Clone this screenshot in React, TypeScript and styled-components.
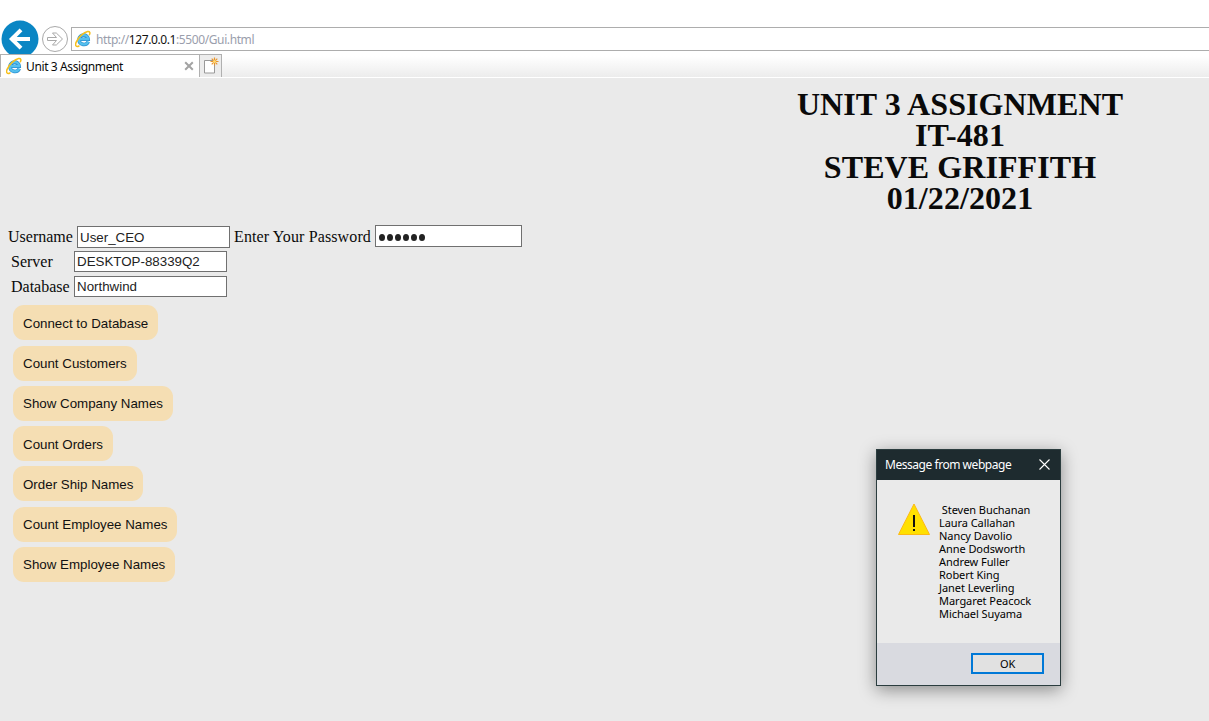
import React from "react";
import styled, { createGlobalStyle } from "styled-components";

const GlobalStyle = createGlobalStyle`
  html, body, #root { margin: 0; height: 100%; }
  body { overflow: hidden; background: #eaeaea; color: #0a0a0a; }
  * { box-sizing: border-box; }
`;

const ui = `"Noto Sans", "Open Sans", sans-serif`;
const arial = `"Liberation Sans", Arial, sans-serif`;
const times = `"Liberation Serif", "Times New Roman", serif`;

const Screen = styled.div`
  width: 1209px;
  height: 721px;
  overflow: hidden;
  position: relative;
  display: flex;
  flex-direction: column;
`;

const Chrome = styled.header`
  flex: none;
  height: 78px;
  padding-top: 20px;
  background: #fff;
  border-bottom: 1px solid #fff;
`;

const NavRow = styled.div`
  display: flex;
  height: 34px;
  padding-left: 1px;
  overflow: hidden;
  > svg { flex: none; }
`;

const AddressBar = styled.div`
  flex: 1;
  height: 24px;
  margin: 7px 0 0 2px;
  display: flex;
  align-items: center;
  padding-left: 3px;
  background: #fff;
  border: solid #adadad;
  border-width: 1px 0 1px 1px;
`;

const Url = styled.span`
  margin: 2px 0 0 5px;
  font: 12px/20px ${ui};
  letter-spacing: -0.4px;
  color: #9a9eac;
  white-space: pre;
  b { font-weight: 400; color: #111; }
`;

const TabRow = styled.div`
  display: flex;
  height: 23px;
  background: linear-gradient(#fff 10%, #ececec);
`;

const Tab = styled.div`
  width: 199px;
  display: flex;
  align-items: center;
  padding: 0 5px;
  background: #fff;
  border-top: 1px solid #b0b0b0;
  border-left: 1px solid #b0b0b0;
`;

const TabTitle = styled.span`
  flex: 1;
  margin: 2px 0 0 4px;
  font: 12px/20px ${ui};
  letter-spacing: -0.38px;
  white-space: nowrap;
`;

const NewTab = styled.div`
  width: 23px;
  display: flex;
  justify-content: center;
  background: #ececec;
  border: 1px solid #b0b0b0;
  border-bottom: 0;
`;

const Page = styled.main`
  width: 1920px;
  padding: 11px 8px 0;
  font: 16px/20px ${times};
`;

const Heading = styled.h1`
  margin: 0;
  font: bold 32px/31.3px ${times};
  letter-spacing: 0.08px;
  text-align: center;
`;

const Credentials = styled.div`
  display: flex;
  height: 23px;
  margin: 10.4px 0 3px;
`;

const FieldRow = styled.div`
  display: flex;
  height: 21px;
  margin: 0 0 4px 3px;
`;

const Label = styled.label<{ $width: number; $top?: number; $spacing?: number }>`
  width: ${(p) => p.$width}px;
  padding-top: ${(p) => p.$top ?? 0}px;
  letter-spacing: ${(p) => p.$spacing ?? 0}px;
  white-space: nowrap;
`;

const TextBox = styled.input<{ $width: number; $height: number; $top?: number }>`
  width: ${(p) => p.$width}px;
  height: ${(p) => p.$height}px;
  margin: ${(p) => p.$top ?? 0}px 4px 0 0;
  padding: 1px 2px 0;
  border: 1px solid #707070;
  border-radius: 0;
  outline: 0;
  background: #fff;
  color: #222;
  font: 13.33px ${arial};
  letter-spacing: 0;
`;

const PasswordBox = styled.div`
  display: flex;
  align-items: center;
  gap: 2px;
  width: 147px;
  height: 22px;
  padding: 4px 3px 0;
  border: 1px solid #707070;
  background: #fff;
`;

const Dot = styled.i`
  width: 6px;
  height: 7px;
  border-radius: 50%;
  background: #222;
`;

const Actions = styled.div`
  display: flex;
  flex-direction: column;
  align-items: flex-start;
  gap: 5.25px;
  padding: 4.7px 0 0 5px;
`;

const Action = styled.button<{ $width: number }>`
  width: ${(p) => p.$width}px;
  height: 35px;
  padding: 1px 0 0 10px;
  border: 0;
  border-radius: 11px;
  background: #f5deb3;
  color: #111;
  font: 13.33px ${arial};
  letter-spacing: 0;
  text-align: left;
  white-space: nowrap;
`;

const Dialog = styled.section`
  position: absolute;
  left: 876px;
  top: 449px;
  width: 185px;
  height: 237px;
  display: flex;
  flex-direction: column;
  border: 1px solid #2b3d3f;
  background: #eaeaea;
  box-shadow: 0 4px 16px rgba(0, 0, 0, 0.4);
`;

const TitleBar = styled.div`
  height: 30px;
  display: flex;
  align-items: center;
  justify-content: space-between;
  padding: 0 10px 0 8px;
  background: #1e2b2f;
  color: #fff;
  font: 12px/20px ${ui};
  letter-spacing: -0.46px;
  white-space: nowrap;
`;

const Message = styled.div`
  flex: 1;
  display: flex;
  padding: 23px 0 0 21px;
`;

const Names = styled.div`
  margin-left: 9px;
  font: 11px/13px ${ui};
  letter-spacing: -0.06px;
  color: #000;
  white-space: pre;
`;

const Footer = styled.div`
  height: 42px;
  display: flex;
  justify-content: flex-end;
  padding: 10px 16px 0 0;
  background: #d9dae0;
`;

const OkButton = styled.button`
  width: 73px;
  height: 21px;
  padding: 0;
  border: 2px solid #0078d7;
  background: #e1e1e1;
  color: #000;
  font: 11px/16px ${ui};
  letter-spacing: -0.2px;
`;

const BrowserLogo = () => (
  <svg width="16" height="18" viewBox="0 0 16 18">
    <path d="M13.2 11.700C11.700 15.800 4 15.400 4 9.600 4 3.800 13 3.600 13.200 9.200H4.300" fill="none" stroke="#2b8fd0" strokeWidth="3.600" />
    <path d="M13.2 11.700C11.700 15.800 4 15.400 4 9.600 4 3.800 13 3.600 13.200 9.200H4.300" fill="none" stroke="#55c0ee" strokeWidth="2.200" />
    <path d="M4 16C1.200 17.300-.2 15.500 1.100 12.400 3 7.600 8.700 2.100 12.700 1.500c2.500-.3 2.500 1.600 1.700 3.300" fill="none" stroke="#f6bf1c" strokeWidth="1.500" strokeLinecap="round" />
  </svg>
);

const BackIcon = () => (
  <svg width="38" height="38" viewBox="0 0 38 38">
    <circle cx="19" cy="19" r="18.500" fill="#0a86c4" />
    <path d="M29 19H11M20 9.800 10.800 19l9.200 9.200" fill="none" stroke="#fff" strokeWidth="4" />
  </svg>
);

const ForwardIcon = () => (
  <svg width="30" height="38" viewBox="0 0 30 38">
    <circle cx="16" cy="19" r="12.500" fill="#fff" stroke="#a9a9a9" />
    <path d="M8.500 17.500h9l-4-4.500h3.800l6.200 6-6.200 6h-3.800l4-4.500h-9Z" fill="#fff" stroke="#a9a9a9" />
  </svg>
);

const NewTabIcon = () => (
  <svg width="17" height="20" viewBox="0 0 17 20">
    <path d="M2.500 5.500h10v12.500h-10Z" fill="#fff" stroke="#999" />
    <path d="M12.500 2.500v8M8.500 6.500h8M9.700 3.700l5.600 5.600M15.300 3.700 9.700 9.300" stroke="#e8952c" strokeWidth="1.200" />
    <circle cx="12.500" cy="6.500" r="1.500" fill="#ffd970" />
  </svg>
);

const actions: [string, number][] = [
  ["Connect to Database", 145],
  ["Count Customers", 124],
  ["Show Company Names", 160],
  ["Count Orders", 100],
  ["Order Ship Names", 130],
  ["Count Employee Names", 164],
  ["Show Employee Names", 162],
];

const names = [
  " Steven Buchanan",
  "Laura Callahan",
  "Nancy Davolio",
  "Anne Dodsworth",
  "Andrew Fuller",
  "Robert King",
  "Janet Leverling",
  "Margaret Peacock",
  "Michael Suyama",
];

export default function App() {
  return (
    <Screen>
      <GlobalStyle />
      <Chrome>
        <NavRow>
          <BackIcon />
          <ForwardIcon />
          <AddressBar>
            <BrowserLogo />
            <Url>http://<b>127.0.0.1</b>:5500/Gui.html</Url>
          </AddressBar>
        </NavRow>
        <TabRow>
          <Tab>
            <BrowserLogo />
            <TabTitle>Unit 3 Assignment</TabTitle>
            <svg width="10" height="10" viewBox="0 0 10 10">
              <path d="m1.200 1.200 7.600 7.600M8.800 1.200 1.200 8.800" stroke="#a3a3a3" strokeWidth="2" />
            </svg>
          </Tab>
          <NewTab><NewTabIcon /></NewTab>
        </TabRow>
      </Chrome>
      <Page>
        <Heading>
          UNIT 3 ASSIGNMENT<br />IT-481<br />STEVE GRIFFITH<br />01/22/2021
        </Heading>
        <Credentials>
          <Label $width={69} $top={2}>Username</Label>
          <TextBox $width={153} $height={22} $top={1} defaultValue="User_CEO" />
          <Label $width={141} $top={2} $spacing={0.12}>Enter Your Password</Label>
          <PasswordBox>
            {Array.from({ length: 6 }, (_, i) => <Dot key={i} />)}
          </PasswordBox>
        </Credentials>
        <FieldRow>
          <Label $width={63} $top={1}>Server</Label>
          <TextBox $width={153} $height={21} defaultValue="DESKTOP-88339Q2" />
        </FieldRow>
        <FieldRow>
          <Label $width={63} $top={1}>Database</Label>
          <TextBox $width={153} $height={21} defaultValue="Northwind" />
        </FieldRow>
        <Actions>
          {actions.map(([label, width]) => (
            <Action key={label} $width={width}>{label}</Action>
          ))}
        </Actions>
      </Page>
      <Dialog>
        <TitleBar>
          Message from webpage
          <svg width="11" height="12" viewBox="0 0 11 12">
            <path d="m.5 .5 10 10M10.500 .5 .5 10.500" stroke="#fff" strokeWidth="1.100" />
          </svg>
        </TitleBar>
        <Message>
          <svg width="32" height="33" viewBox="0 0 32 33">
            <path d="M16 1 31.500 31.500H.5Z" fill="#ffe000" stroke="#fdb913" />
            <path d="M16 12v12M16 26v2" stroke="#111" strokeWidth="2" />
          </svg>
          <Names>{names.join("\n")}</Names>
        </Message>
        <Footer><OkButton>OK</OkButton></Footer>
      </Dialog>
    </Screen>
  );
}
